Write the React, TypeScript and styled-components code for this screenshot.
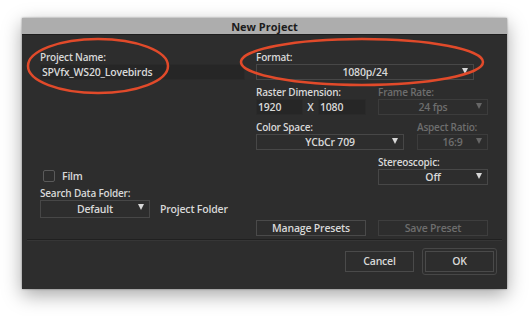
import styled, { createGlobalStyle, css } from 'styled-components';

const GlobalStyle = createGlobalStyle`
	html, body {
		margin: 0;
		padding: 0;
		background: #ffffff;
	}
	body {
		font-family: 'Open Sans', 'Liberation Sans', sans-serif;
	}
`;

const colors = {
	body: '#2d2d2d',
	field: '#262626',
	border: '#474747',
	text: '#d8d8d8',
	dim: '#6e6e6e',
	title: '#adadad',
	ring: '#e14a2a',
};

const Page = styled.div`
	position: relative;
	width: 530px;
	height: 316px;
	padding: 18px 0 0 22px;
	box-sizing: border-box;
`;

const Dialog = styled.div`
	width: 485px;
	height: 271px;
	display: flex;
	flex-direction: column;
	background: ${colors.body};
	box-shadow: 0 6px 18px rgba(0, 0, 0, 0.35), 0 0 2px rgba(0, 0, 0, 0.4);
	font-size: 10px;
	letter-spacing: -0.2px;
	font-weight: 600;
	color: ${colors.text};
`;

const TitleBar = styled.div`
	height: 17px;
	flex-shrink: 0;
	display: flex;
	align-items: center;
	justify-content: center;
	background: ${colors.title};
	border-bottom: 1px solid #1e1e1e;
	box-sizing: border-box;
	color: #1c1c1c;
	font-size: 11px;
	font-weight: 700;
	letter-spacing: 0;
`;

const Content = styled.div`
	display: flex;
	gap: 11px;
	padding: 15px 0 0 18px;
	height: 204px;
	flex-shrink: 0;
	box-sizing: border-box;
`;

const LeftCol = styled.div`
	width: 205px;
	display: flex;
	flex-direction: column;
`;

const RightCol = styled.div`
	width: 232px;
	display: flex;
	flex-direction: column;
	gap: 5px;
`;

const Row = styled.div`
	display: flex;
	justify-content: space-between;
	align-items: flex-end;
`;

const Field = styled.div<{ $w: number }>`
	width: ${p => p.$w}px;
	display: flex;
	flex-direction: column;
`;

const Label = styled.div<{ $disabled?: boolean }>`
	height: 14px;
	line-height: 14px;
	white-space: nowrap;
	color: ${p => (p.$disabled ? colors.dim : colors.text)};
`;

const TextBox = styled.div<{ $w?: number }>`
	height: 16px;
	line-height: 15px;
	padding: 0 1px;
	width: ${p => (p.$w ? `${p.$w}px` : 'auto')};
	box-sizing: border-box;
	background: ${colors.field};
	border: 1px solid #2a2a2a;
	font-size: 10.5px;
	color: ${colors.text};
	white-space: nowrap;
`;

const SelectBox = styled.div<{ $w: number; $h?: number; $disabled?: boolean }>`
	position: relative;
	flex-shrink: 0;
	width: ${p => p.$w}px;
	height: ${p => p.$h ?? 16}px;
	line-height: ${p => (p.$h ?? 16) - 2}px;
	box-sizing: border-box;
	border: 1px solid ${colors.border};
	text-align: center;
	font-size: 10.5px;
	color: ${p => (p.$disabled ? colors.dim : colors.text)};
	${p =>
		p.$disabled &&
		css`
			border-color: #3c3c3c;
		`}
`;

const Arrow = styled.span<{ $disabled?: boolean }>`
	position: absolute;
	right: 5px;
	top: 3px;
	width: 0;
	height: 0;
	border-left: 3.5px solid transparent;
	border-right: 3.5px solid transparent;
	border-top: 6px solid ${p => (p.$disabled ? '#666' : '#d8d8d8')};
`;

const DimRow = styled.div`
	display: flex;
	align-items: center;
`;

const Times = styled.span`
	width: 15px;
	text-align: center;
	font-size: 10.5px;
`;

const Spacer = styled.div<{ $h: number }>`
	height: ${p => p.$h}px;
	flex-shrink: 0;
`;

const CheckRow = styled.div`
	display: flex;
	align-items: center;
	gap: 7px;
	padding-left: 3px;
	height: 15px;
	font-size: 10.5px;
`;

const Check = styled.span`
	width: 12px;
	height: 12px;
	box-sizing: border-box;
	border: 1px solid #5a5a5a;
	border-radius: 2px;
`;

const FolderRow = styled.div`
	display: flex;
	align-items: center;
	gap: 10px;
	font-size: 10.5px;
`;

const Button = styled.div<{ $w: number; $h?: number; $disabled?: boolean }>`
	width: ${p => p.$w}px;
	height: ${p => p.$h ?? 16}px;
	line-height: ${p => (p.$h ?? 16) - 2}px;
	box-sizing: border-box;
	border: 1px solid ${p => (p.$disabled ? '#3e3e3e' : '#4a4a4a')};
	text-align: center;
	font-size: 10.5px;
	color: ${p => (p.$disabled ? colors.dim : colors.text)};
`;

const PresetRow = styled.div`
	display: flex;
	justify-content: space-between;
	margin-top: 30px;
`;

const Separator = styled.div`
	margin: 0 5px;
	height: 1px;
	background: #202020;
	border-bottom: 1px solid #363636;
`;

const Footer = styled.div`
	display: flex;
	justify-content: flex-end;
	align-items: center;
	gap: 8px;
	padding: 7px 10px 0 0;
`;

const FocusRing = styled.div`
	padding: 2px;
	border: 1px solid #474747;
	border-radius: 3px;
`;

const Annotation = styled.svg`
	position: absolute;
	left: 0;
	top: 0;
	pointer-events: none;
`;

const App = () => {
	return (
		<Page>
			<GlobalStyle />
			<Dialog>
				<TitleBar>New Project</TitleBar>
				<Content>
					<LeftCol>
						<Label>Project Name:</Label>
						<TextBox>SPVfx_WS20_Lovebirds</TextBox>
						<Spacer $h={88} />
						<CheckRow>
							<Check />
							<span>Film</span>
						</CheckRow>
						<Spacer $h={3} />
						<Label>Search Data Folder:</Label>
						<FolderRow>
							<SelectBox $w={110} $h={18}>
								Default
								<Arrow />
							</SelectBox>
							<span>Project Folder</span>
						</FolderRow>
					</LeftCol>
					<RightCol>
						<Field $w={218}>
							<Label>Format:</Label>
							<SelectBox $w={218}>
								1080p/24
								<Arrow />
							</SelectBox>
						</Field>
						<Row>
							<Field $w={110}>
								<Label>Raster Dimension:</Label>
								<DimRow>
									<TextBox $w={47}>1920</TextBox>
									<Times>X</Times>
									<TextBox $w={48}>1080</TextBox>
								</DimRow>
							</Field>
							<Field $w={110}>
								<Label $disabled>Frame Rate:</Label>
								<SelectBox $w={110} $disabled>
									24 fps
									<Arrow $disabled />
								</SelectBox>
							</Field>
						</Row>
						<Row>
							<Field $w={148}>
								<Label>Color Space:</Label>
								<SelectBox $w={148}>
									YCbCr 709
									<Arrow />
								</SelectBox>
							</Field>
							<Field $w={71}>
								<Label $disabled>Aspect Ratio:</Label>
								<SelectBox $w={71} $disabled>
									16:9
									<Arrow $disabled />
								</SelectBox>
							</Field>
						</Row>
						<Row>
							<span />
							<Field $w={110}>
								<Label>Stereoscopic:</Label>
								<SelectBox $w={110}>
									Off
									<Arrow />
								</SelectBox>
							</Field>
						</Row>
						<PresetRow>
							<Button $w={110}>Manage Presets</Button>
							<Button $w={110} $disabled>
								Save Preset
							</Button>
						</PresetRow>
					</RightCol>
				</Content>
				<Separator />
				<Footer>
					<Button $w={69} $h={21}>
						Cancel
					</Button>
					<FocusRing>
						<Button $w={69} $h={21}>
							OK
						</Button>
					</FocusRing>
				</Footer>
			</Dialog>
			<Annotation width="530" height="316" viewBox="0 0 530 316">
				<ellipse cx="98" cy="66" rx="70" ry="27" fill="none" stroke={colors.ring} strokeWidth="2.5" />
				<ellipse cx="362" cy="62" rx="121" ry="23" fill="none" stroke={colors.ring} strokeWidth="2.5" />
			</Annotation>
		</Page>
	);
};

export default App;
